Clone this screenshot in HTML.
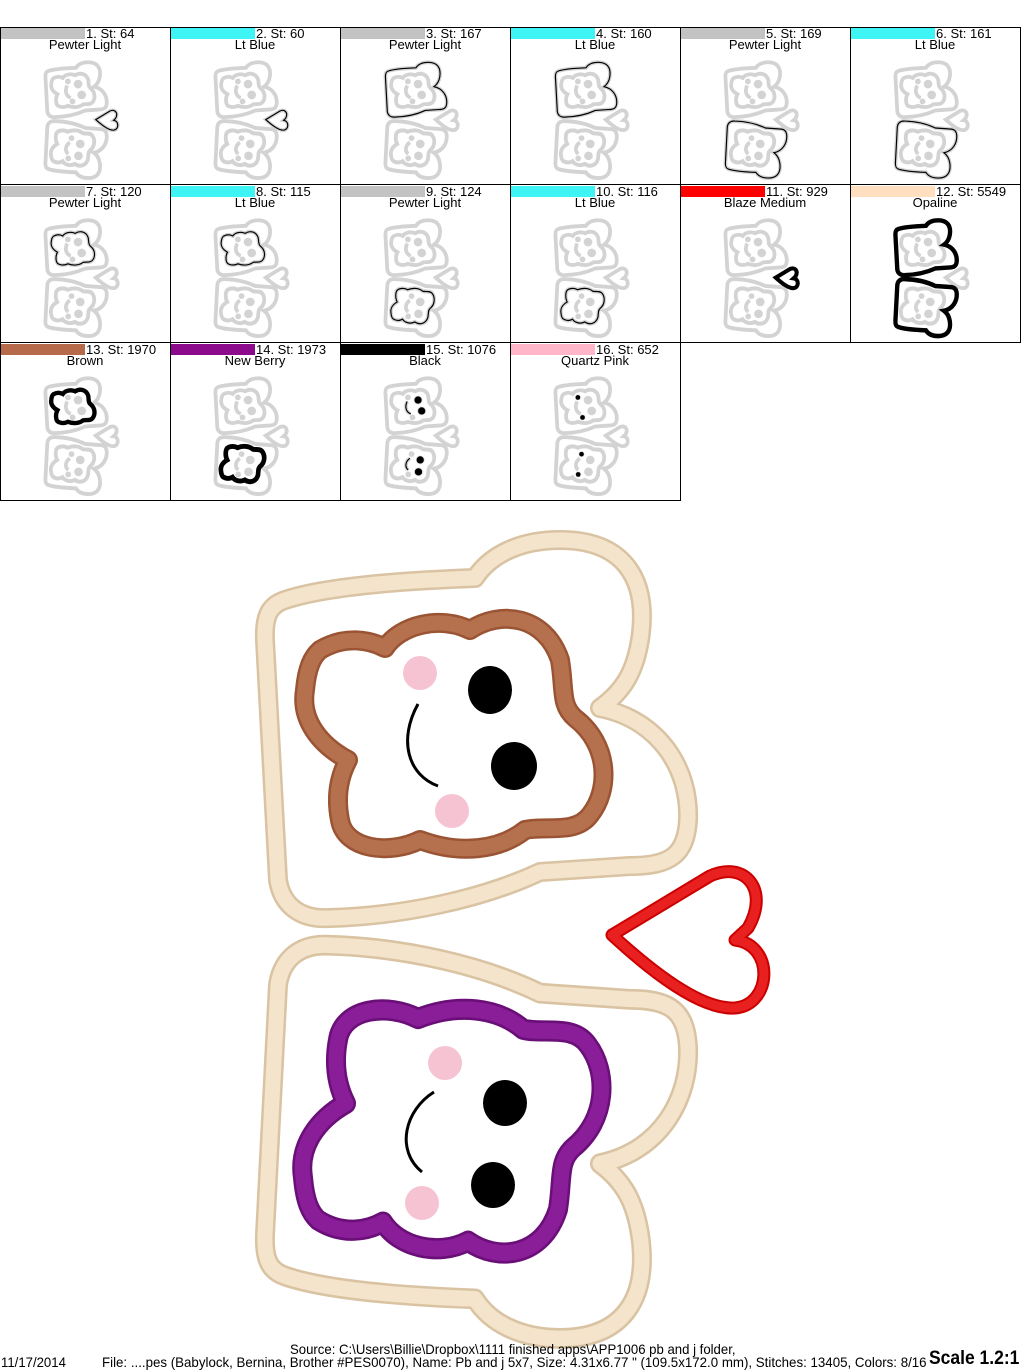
<!DOCTYPE html>
<html><head><meta charset="utf-8"><style>
body{margin:0;width:1024px;height:1370px;background:#fff;position:relative;overflow:hidden;font-family:"Liberation Sans",sans-serif;}
.c{position:absolute;width:170px;height:157px;}
.bar{position:absolute;left:1px;top:1px;width:84px;height:11px;}
.n{position:absolute;left:86px;top:0px;font-size:13px;line-height:14px;white-space:nowrap;}
.t{position:absolute;left:0;width:170px;top:11px;text-align:center;font-size:13px;line-height:14px;}
svg.th{position:absolute;left:0;top:0;}
.foot{position:absolute;font-size:14px;white-space:nowrap;transform-origin:0 0;}
</style></head><body>
<svg width="0" height="0" style="position:absolute">
<defs>
<path id="bread" d="M285,600 C330,585 420,580 475,578 C490,555 520,540 560,540 C620,540 650,575 640,640 C635,670 625,690 600,708 C660,720 690,770 688,820 C686,855 670,866 630,866 L540,872 C480,900 400,916 330,918 C300,920 282,905 278,880 L265,640 C264,615 270,605 285,600 Z"/>
<path id="cloud" d="M320,650 C345,635 370,640 385,648 C400,625 440,615 470,630 C500,610 545,615 560,660 C565,690 560,705 575,718 C610,745 610,790 590,815 C575,835 545,825 525,830 C500,850 460,855 420,840 C390,855 345,850 340,820 C335,795 340,775 348,760 C320,745 300,720 305,690 C307,668 312,657 320,650 Z"/>
<path id="heart" d="M612,935 L710,876 C745,860 770,890 748,928 L735,940 C775,945 772,1005 735,1008 C700,1010 650,970 612,935 Z"/>
<g id="grey" fill="none" stroke="#d3d3d3" stroke-width="26">
<use href="#bread"/><use href="#bread" transform="matrix(1,0,0,-1.04,0,1900)"/>
<use href="#cloud"/><use href="#cloud" transform="translate(453,1132) scale(1,-1.06) translate(-455,-733)"/>
<use href="#heart"/>
<path d="M415,700 C395,740 410,775 440,785 M434,1092 C405,1110 395,1150 422,1172"/>
<g fill="#d3d3d3" stroke="none"><circle cx="490" cy="690" r="30"/><circle cx="515" cy="765" r="30"/><circle cx="505" cy="1103" r="30"/><circle cx="493" cy="1185" r="30"/><circle cx="420" cy="672" r="20"/><circle cx="452" cy="810" r="20"/><circle cx="445" cy="1063" r="20"/><circle cx="422" cy="1203" r="20"/></g>
</g>
</defs></svg>

<div style="position:absolute;left:0;top:27px;width:1021px;height:1px;background:#000"></div>
<div style="position:absolute;left:0;top:184px;width:1021px;height:1px;background:#000"></div>
<div style="position:absolute;left:0;top:342px;width:1021px;height:1px;background:#000"></div>
<div style="position:absolute;left:0;top:500px;width:681px;height:1px;background:#000"></div>
<div style="position:absolute;left:0;top:27px;width:1px;height:474px;background:#000"></div>
<div style="position:absolute;left:170px;top:27px;width:1px;height:474px;background:#000"></div>
<div style="position:absolute;left:340px;top:27px;width:1px;height:474px;background:#000"></div>
<div style="position:absolute;left:510px;top:27px;width:1px;height:474px;background:#000"></div>
<div style="position:absolute;left:680px;top:27px;width:1px;height:474px;background:#000"></div>
<div style="position:absolute;left:850px;top:27px;width:1px;height:316px;background:#000"></div>
<div style="position:absolute;left:1020px;top:27px;width:1px;height:316px;background:#000"></div>

<div class="c" style="left:0;top:27px"><div class="bar" style="background:#c3c3c3"></div><svg class="th" width="170" height="157"><g transform="translate(7,-43) scale(0.145)"><use href="#grey"/><use href="#heart" fill="none" stroke="#000" stroke-width="8"/></g></svg><div class="n">1. St: 64</div><div class="t">Pewter Light</div></div>
<div class="c" style="left:170px;top:27px"><div class="bar" style="background:#3ff4f4"></div><svg class="th" width="170" height="157"><g transform="translate(7,-43) scale(0.145)"><use href="#grey"/><use href="#heart" fill="none" stroke="#000" stroke-width="8"/></g></svg><div class="n">2. St: 60</div><div class="t">Lt Blue</div></div>
<div class="c" style="left:340px;top:27px"><div class="bar" style="background:#c3c3c3"></div><svg class="th" width="170" height="157"><g transform="translate(7,-43) scale(0.145)"><use href="#grey"/><use href="#bread" fill="none" stroke="#000" stroke-width="8"/></g></svg><div class="n">3. St: 167</div><div class="t">Pewter Light</div></div>
<div class="c" style="left:510px;top:27px"><div class="bar" style="background:#3ff4f4"></div><svg class="th" width="170" height="157"><g transform="translate(7,-43) scale(0.145)"><use href="#grey"/><use href="#bread" fill="none" stroke="#000" stroke-width="8"/></g></svg><div class="n">4. St: 160</div><div class="t">Lt Blue</div></div>
<div class="c" style="left:680px;top:27px"><div class="bar" style="background:#c3c3c3"></div><svg class="th" width="170" height="157"><g transform="translate(7,-43) scale(0.145)"><use href="#grey"/><use href="#bread" transform="matrix(1,0,0,-1.04,0,1900)" fill="none" stroke="#000" stroke-width="8"/></g></svg><div class="n">5. St: 169</div><div class="t">Pewter Light</div></div>
<div class="c" style="left:850px;top:27px"><div class="bar" style="background:#3ff4f4"></div><svg class="th" width="170" height="157"><g transform="translate(7,-43) scale(0.145)"><use href="#grey"/><use href="#bread" transform="matrix(1,0,0,-1.04,0,1900)" fill="none" stroke="#000" stroke-width="8"/></g></svg><div class="n">6. St: 161</div><div class="t">Lt Blue</div></div>

<div class="c" style="left:0;top:185px"><div class="bar" style="background:#c3c3c3"></div><svg class="th" width="170" height="157"><g transform="translate(7,-43) scale(0.145)"><use href="#grey"/><use href="#cloud" fill="none" stroke="#000" stroke-width="8"/></g></svg><div class="n">7. St: 120</div><div class="t">Pewter Light</div></div>
<div class="c" style="left:170px;top:185px"><div class="bar" style="background:#3ff4f4"></div><svg class="th" width="170" height="157"><g transform="translate(7,-43) scale(0.145)"><use href="#grey"/><use href="#cloud" fill="none" stroke="#000" stroke-width="8"/></g></svg><div class="n">8. St: 115</div><div class="t">Lt Blue</div></div>
<div class="c" style="left:340px;top:185px"><div class="bar" style="background:#c3c3c3"></div><svg class="th" width="170" height="157"><g transform="translate(7,-43) scale(0.145)"><use href="#grey"/><use href="#cloud" transform="translate(453,1132) scale(1,-1.06) translate(-455,-733)" fill="none" stroke="#000" stroke-width="8"/></g></svg><div class="n">9. St: 124</div><div class="t">Pewter Light</div></div>
<div class="c" style="left:510px;top:185px"><div class="bar" style="background:#3ff4f4"></div><svg class="th" width="170" height="157"><g transform="translate(7,-43) scale(0.145)"><use href="#grey"/><use href="#cloud" transform="translate(453,1132) scale(1,-1.06) translate(-455,-733)" fill="none" stroke="#000" stroke-width="8"/></g></svg><div class="n">10. St: 116</div><div class="t">Lt Blue</div></div>
<div class="c" style="left:680px;top:185px"><div class="bar" style="background:#f00"></div><svg class="th" width="170" height="157"><g transform="translate(7,-43) scale(0.145)"><use href="#grey"/><use href="#heart" fill="none" stroke="#000" stroke-width="28"/></g></svg><div class="n">11. St: 929</div><div class="t">Blaze Medium</div></div>
<div class="c" style="left:850px;top:185px"><div class="bar" style="background:#ffdfc0"></div><svg class="th" width="170" height="157"><g transform="translate(7,-43) scale(0.145)"><use href="#grey"/><use href="#bread" fill="none" stroke="#000" stroke-width="30"/><use href="#bread" transform="matrix(1,0,0,-1.04,0,1900)" fill="none" stroke="#000" stroke-width="30"/></g></svg><div class="n">12. St: 5549</div><div class="t">Opaline</div></div>

<div class="c" style="left:0;top:343px"><div class="bar" style="background:#b66a4a"></div><svg class="th" width="170" height="157"><g transform="translate(7,-43) scale(0.145)"><use href="#grey"/><use href="#cloud" fill="none" stroke="#000" stroke-width="30"/></g></svg><div class="n">13. St: 1970</div><div class="t">Brown</div></div>
<div class="c" style="left:170px;top:343px"><div class="bar" style="background:#8c0a8c"></div><svg class="th" width="170" height="157"><g transform="translate(7,-43) scale(0.145)"><use href="#grey"/><use href="#cloud" transform="translate(453,1132) scale(1,-1.06) translate(-455,-733)" fill="none" stroke="#000" stroke-width="32"/></g></svg><div class="n">14. St: 1973</div><div class="t">New Berry</div></div>
<div class="c" style="left:340px;top:343px"><div class="bar" style="background:#000"></div><svg class="th" width="170" height="157"><g transform="translate(7,-43) scale(0.145)"><use href="#grey"/><g fill="#000"><circle cx="490" cy="690" r="25"/><circle cx="515" cy="765" r="25"/><circle cx="505" cy="1103" r="25"/><circle cx="493" cy="1185" r="25"/></g><path d="M415,700 C395,740 410,775 440,785 M434,1092 C405,1110 395,1150 422,1172" fill="none" stroke="#000" stroke-width="8"/></g></svg><div class="n">15. St: 1076</div><div class="t">Black</div></div>
<div class="c" style="left:510px;top:343px"><div class="bar" style="background:#ffb6c8"></div><svg class="th" width="170" height="157"><g transform="translate(7,-43) scale(0.145)"><use href="#grey"/><g fill="#000"><circle cx="420" cy="672" r="16"/><circle cx="452" cy="810" r="16"/><circle cx="445" cy="1063" r="16"/><circle cx="422" cy="1203" r="16"/></g></g></svg><div class="n">16. St: 652</div><div class="t">Quartz Pink</div></div>

<svg style="position:absolute;left:0;top:0" width="1024" height="1370">
<g fill="none" stroke-linejoin="round">
<use href="#bread" stroke="#d9c3a2" stroke-width="20"/><use href="#bread" stroke="#f4e4cc" stroke-width="15"/>
<g transform="matrix(1,0,0,-1.04,0,1900)"><use href="#bread" stroke="#d9c3a2" stroke-width="20"/><use href="#bread" stroke="#f4e4cc" stroke-width="15"/></g>
<use href="#cloud" stroke="#9a5434" stroke-width="20"/><use href="#cloud" stroke="#b5704e" stroke-width="15"/>
<g transform="translate(453,1132) scale(1,-1.06) translate(-455,-733)"><use href="#cloud" stroke="#6a0e78" stroke-width="20"/><use href="#cloud" stroke="#8a1e98" stroke-width="15"/></g>
<use href="#heart" stroke="#c00" stroke-width="13"/><use href="#heart" stroke="#e82020" stroke-width="9"/>
<path d="M418,704 C398,740 408,775 438,786 M434,1092 C405,1110 395,1150 422,1172" stroke="#000" stroke-width="3"/>
</g>
<g fill="#000"><ellipse cx="490" cy="690" rx="22" ry="24"/><ellipse cx="514" cy="766" rx="23" ry="24"/><ellipse cx="505" cy="1103" rx="22" ry="23"/><ellipse cx="493" cy="1185" rx="22" ry="23"/></g>
<g fill="#f6c3d3"><ellipse cx="420" cy="673" rx="17" ry="17"/><ellipse cx="452" cy="811" rx="17" ry="17"/><ellipse cx="445" cy="1063" rx="17" ry="17"/><ellipse cx="422" cy="1203" rx="17" ry="17"/></g>
</svg>

<div class="foot" style="left:290px;top:1341px;transform:scaleX(0.94)">Source: C:\Users\Billie\Dropbox\1111 finished apps\APP1006 pb and j folder,</div>
<div class="foot" style="left:1px;top:1354px;transform:scaleX(0.94)">11/17/2014</div>
<div class="foot" style="left:102px;top:1354px;transform:scaleX(0.95)">File: ....pes (Babylock, Bernina, Brother #PES0070), Name: Pb and j 5x7, Size: 4.31x6.77 " (109.5x172.0 mm), Stitches: 13405, Colors: 8/16</div>
<div class="foot" style="left:929px;top:1348px;font-size:19px;font-weight:bold;transform:scaleX(0.92)">Scale 1.2:1</div>
</body></html>
